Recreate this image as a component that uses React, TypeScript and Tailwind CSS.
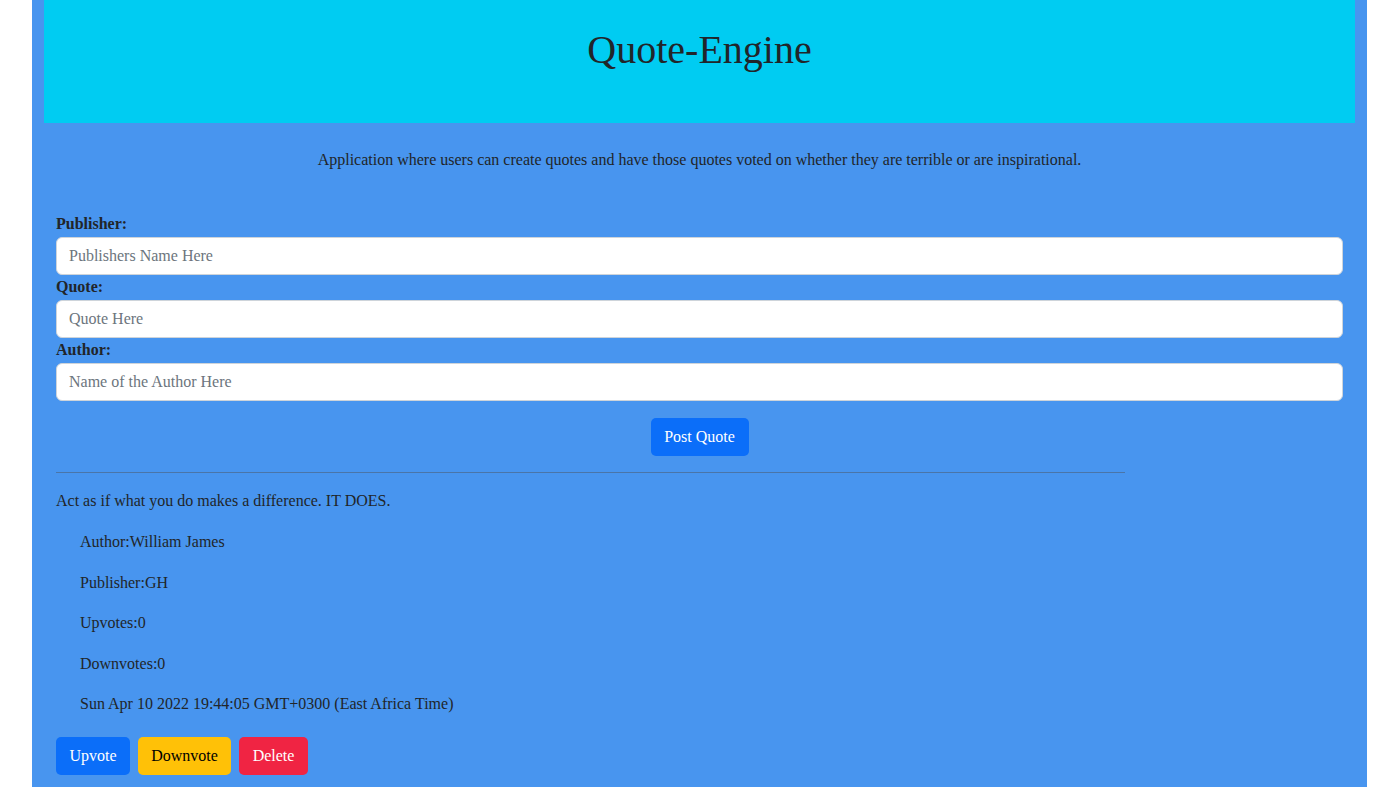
import React from "react";

export default function App() {
  const serif = { fontFamily: '"Liberation Serif", "Times New Roman", serif' };
  return (
    <div className="min-h-screen bg-white text-[#212529]" style={serif}>
      <div className="ml-[32px] w-[1335px] bg-[#4895ef] px-3 pb-[40px]">
        <div className="h-[123px] bg-[#00ccf2] flex justify-center pt-[26px]">
          <h1 className="text-[40px] leading-[48px] font-normal">Quote-Engine</h1>
        </div>
        <p className="mt-[25px] text-center text-[16px] leading-[24px]">
          Application where users can create quotes and have those quotes voted on whether they are terrible or are inspirational.
        </p>
        <div className="px-3 mt-[40px]">
          <label className="block font-bold text-[16px] leading-[24px]">Publisher:</label>
          <input
            className="mt-px block w-full h-[38px] bg-white border border-[#ced4da] rounded-[6px] px-3 text-[16px] placeholder:text-[#6c757d] outline-none"
            placeholder="Publishers Name Here"
            style={serif}
          />
          <label className="block font-bold text-[16px] leading-[24px]">Quote:</label>
          <input
            className="mt-px block w-full h-[38px] bg-white border border-[#ced4da] rounded-[6px] px-3 text-[16px] placeholder:text-[#6c757d] outline-none"
            placeholder="Quote Here"
            style={serif}
          />
          <label className="block font-bold text-[16px] leading-[24px]">Author:</label>
          <input
            className="mt-px block w-full h-[38px] bg-white border border-[#ced4da] rounded-[6px] px-3 text-[16px] placeholder:text-[#6c757d] outline-none"
            placeholder="Name of the Author Here"
            style={serif}
          />
          <div className="flex justify-center mt-[17px]">
            <button
              className="h-[38px] w-[98px] bg-[#0b6ef9] text-white rounded-[5px] text-[16px]"
              style={serif}
            >
              Post Quote
            </button>
          </div>
          <div className="mt-[16px] h-px w-[1069px] bg-[#4a75a8]" />
          <p className="mt-[16px] text-[16px] leading-[24px]">Act as if what you do makes a difference. IT DOES.</p>
          <div className="pl-6 mt-[17px] text-[16px] leading-[24px]">
            <p className="mb-[16.5px]">Author:William James</p>
            <p className="mb-[16.5px]">Publisher:GH</p>
            <p className="mb-[16.5px]">Upvotes:0</p>
            <p className="mb-[16.5px]">Downvotes:0</p>
            <p>Sun Apr 10 2022 19:44:05 GMT+0300 (East Africa Time)</p>
          </div>
          <div className="flex gap-[8px] mt-[21px]">
            <button className="h-[38px] w-[74px] bg-[#0b6ef9] text-white rounded-[5px] text-[16px]" style={serif}>
              Upvote
            </button>
            <button className="h-[38px] w-[93px] bg-[#ffc107] text-black rounded-[5px] text-[16px]" style={serif}>
              Downvote
            </button>
            <button className="h-[38px] w-[69px] bg-[#f02443] text-white rounded-[5px] text-[16px]" style={serif}>
              Delete
            </button>
          </div>
        </div>
      </div>
    </div>
  );
}
